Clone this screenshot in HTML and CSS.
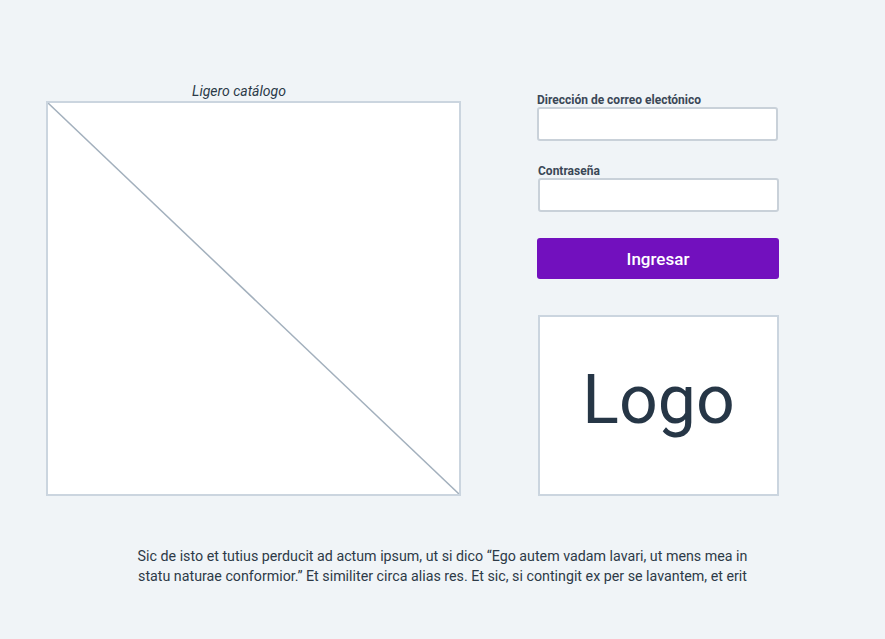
FILE: index.html
```html
<!DOCTYPE html>
<html lang="es">
<head>
<meta charset="utf-8">
<title>Ligero catálogo</title>
<link rel="stylesheet" href="styles.css">
</head>
<body>
<main class="page">
  <div class="row">
    <section class="left">
      <div class="caption">Ligero catálogo</div>
      <div class="placeholder">
        <svg class="diag" viewBox="0 0 100 100" preserveAspectRatio="none">
          <line x1="0" y1="0" x2="100" y2="100" vector-effect="non-scaling-stroke"></line>
        </svg>
      </div>
    </section>
    <section class="right">
      <label class="label">Dirección de correo electónico</label>
      <input class="field" type="email">
      <label class="label label-2">Contraseña</label>
      <input class="field field-2" type="password">
      <button class="btn">Ingresar</button>
      <div class="logo">Logo</div>
    </section>
  </div>
  <p class="text">Sic de isto et tutius perducit ad actum ipsum, ut si dico “Ego autem vadam lavari, ut mens mea in statu naturae conformior.” Et similiter circa alias res. Et sic, si contingit ex per se lavantem, et erit</p>
</main>
</body>
</html>
```
FILE: styles.css
```css
* { box-sizing: border-box; }
html, body { margin: 0; padding: 0; }
body {
  background: #f0f4f7;
  font-family: Roboto, "Liberation Sans", sans-serif;
  color: #2b3a48;
  width: 885px;
  height: 639px;
  overflow: hidden;
}
.page { padding-top: 82px; }
.row { display: flex; align-items: flex-start; gap: 76px; padding-left: 46px; }
.left { width: 415px; }
.caption {
  font-style: italic;
  font-size: 14px;
  line-height: 18px;
  text-align: center;
  padding-right: 29px;
  color: #2b3a48;
  margin-bottom: 1px;
}
.placeholder {
  position: relative;
  height: 395px;
  background: #fff;
  border: 2px solid #cbd5df;
}
.diag { position: absolute; inset: 0; width: 100%; height: 100%; }
.diag line { stroke: #a3b0bd; stroke-width: 1.5; }
.right { width: 242px; display: flex; flex-direction: column; padding-top: 11px; }
.label {
  font-size: 12px;
  font-weight: 700;
  line-height: 14px;
  color: #3a4756;
}
.label-2 { margin-top: 23px; padding-left: 1px; }
.field {
  height: 34px;
  width: 241px;
  background: #fff;
  border: 2px solid #c9d1d9;
  border-radius: 3px;
}
.field-2 { margin-left: 1px; }
.btn {
  margin-top: 26px;
  height: 41px;
  width: 242px;
  border: none;
  border-radius: 3px;
  background: #7210be;
  color: #fff;
  font-family: inherit;
  font-size: 17px;
  font-weight: 500;
}
.logo {
  margin-top: 36px;
  margin-left: 1px;
  width: 241px;
  height: 181px;
  background: #fff;
  border: 2px solid #cbd5df;
  display: flex;
  align-items: center;
  justify-content: center;
  padding-bottom: 12px;
  font-size: 68px;
  color: #263646;
}
.text {
  width: 630px;
  margin: 50px auto 0;
  text-align: center;
  font-size: 14.25px;
  line-height: 20px;
  color: #2d3a47;
}
```
